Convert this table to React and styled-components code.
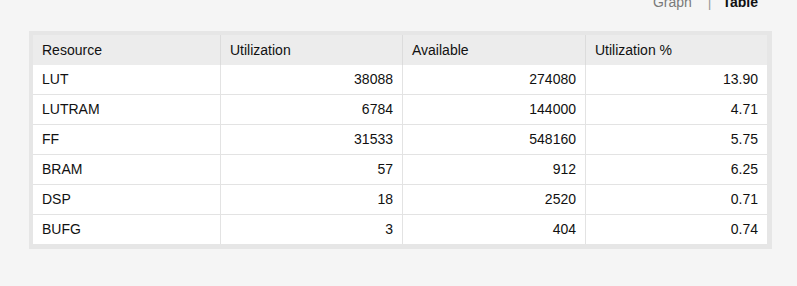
import React from 'react'
import styled, { createGlobalStyle } from 'styled-components'

const GlobalStyle = createGlobalStyle`
  html, body {
    margin: 0;
    padding: 0;
    background: #f5f5f5;
    font-family: Arial, "Liberation Sans", sans-serif;
    color: #111;
  }
`

const Page = styled.div`
  width: 797px;
  height: 286px;
  overflow: hidden;
`

const ViewToggle = styled.div`
  display: flex;
  justify-content: flex-end;
  align-items: center;
  height: 16px;
  margin-top: -6px;
  padding-right: 39px;
  font-size: 14px;
  line-height: 16px;
`

const ToggleItem = styled.span`
  color: ${(p) => (p.active ? '#111' : '#7a7a7a')};
  font-weight: ${(p) => (p.active ? 700 : 400)};
`

const Divider = styled.span`
  color: #999;
  margin: 0 11px 0 16px;
`

const Panel = styled.div`
  margin: 21px 0 0 29px;
  width: 734px;
  padding: 4px 5px 5px 4px;
  background: #e6e6e6;
`

const Table = styled.div`
  background: #fff;
  font-size: 14px;
`

const Row = styled.div`
  display: grid;
  grid-template-columns: 187px 182px 183px 182px;
  height: ${(p) => (p.head ? '30px' : '29px')};
  background: ${(p) => (p.head ? '#ececec' : '#fff')};
  border-top: ${(p) => (p.head || p.first ? 'none' : '1px solid #e3e3e3')};
`

const Cell = styled.div`
  display: flex;
  align-items: center;
  justify-content: ${(p) => (p.num ? 'flex-end' : 'flex-start')};
  padding: 0 9px 1px 9px;
  border-left: ${(p) => (p.first ? 'none' : `1px solid ${p.head ? '#dcdcdc' : '#e3e3e3'}`)};
  white-space: nowrap;
`

const columns = ['Resource', 'Utilization', 'Available', 'Utilization %']

const rows = [
  ['LUT', '38088', '274080', '13.90'],
  ['LUTRAM', '6784', '144000', '4.71'],
  ['FF', '31533', '548160', '5.75'],
  ['BRAM', '57', '912', '6.25'],
  ['DSP', '18', '2520', '0.71'],
  ['BUFG', '3', '404', '0.74']
]

const App = () => (
  <Page>
    <GlobalStyle />
    <ViewToggle>
      <ToggleItem>Graph</ToggleItem>
      <Divider>|</Divider>
      <ToggleItem active>Table</ToggleItem>
    </ViewToggle>
    <Panel>
      <Table>
        <Row head>
          {columns.map((c, i) => (
            <Cell key={c} head first={i === 0}>
              {c}
            </Cell>
          ))}
        </Row>
        {rows.map((r, ri) => (
          <Row key={r[0]} first={ri === 0}>
            {r.map((v, i) => (
              <Cell key={i} first={i === 0} num={i > 0}>
                {v}
              </Cell>
            ))}
          </Row>
        ))}
      </Table>
    </Panel>
  </Page>
)

export default App
